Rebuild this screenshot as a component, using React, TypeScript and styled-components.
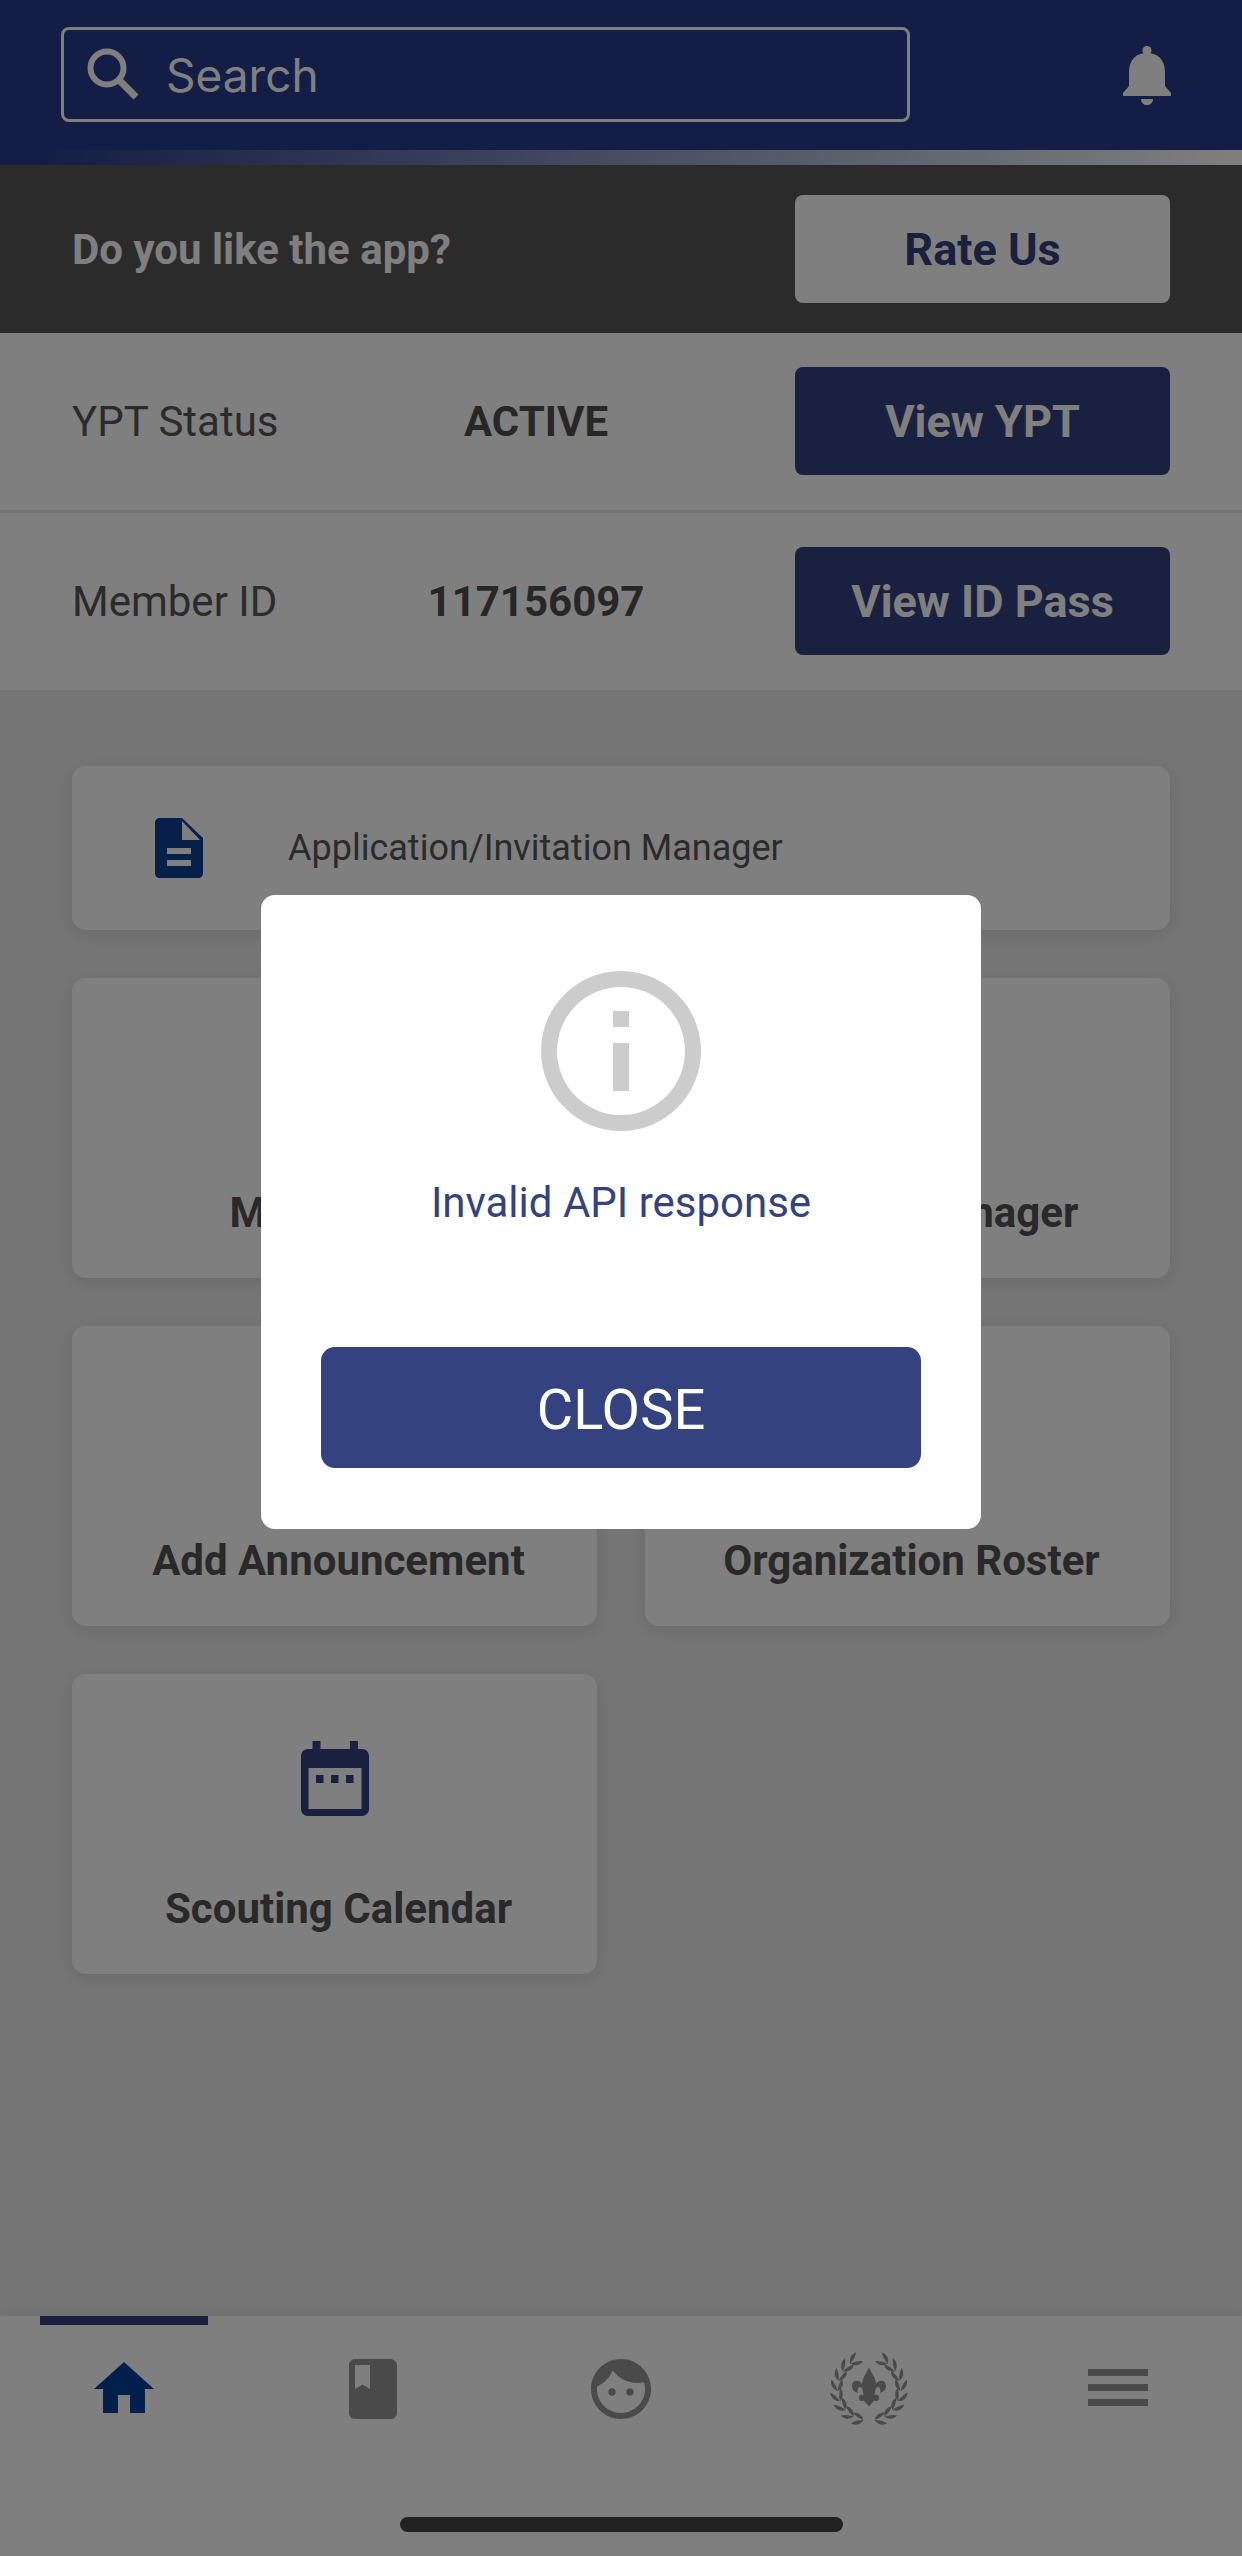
import React from 'react'
import styled, { createGlobalStyle } from 'styled-components'

const GlobalStyle = createGlobalStyle`
  html, body {
    margin: 0;
    padding: 0;
    background: #ebebeb;
    font-family: Roboto, "Liberation Sans", sans-serif;
  }
`
const Page = styled.div`
  width: 1242px;
  height: 2556px;
  position: relative;
  display: flex;
  flex-direction: column;
  overflow: hidden;
  background: #ebebeb;
`
const Header = styled.header`
  height: 150px;
  box-sizing: border-box;
  padding: 27px 71px 0 61px;
  display: flex;
  justify-content: space-between;
  align-items: flex-start;
  background: #283a8a;
`
const SearchBox = styled.div`
  width: 849px;
  height: 95px;
  box-sizing: border-box;
  border: 3px solid #fff;
  border-radius: 8px;
  padding-left: 23px;
  display: flex;
  align-items: center;
  gap: 25px;
`
const SearchText = styled.span`
  font-family: Inter, Roboto, sans-serif;
  font-size: 46px;
  color: #fff;
`
const BellButton = styled.div`
  display: flex;
  padding-top: 19px;
`
const HeaderStrip = styled.div`
  height: 15px;
  background: linear-gradient(90deg, #283a8a 3%, #ffffff 100%);
`
const RateBand = styled.section`
  height: 168px;
  box-sizing: border-box;
  padding: 0 72px;
  display: flex;
  justify-content: space-between;
  align-items: center;
  background: #565656;
`
const RateText = styled.span`
  font-size: 42px;
  font-weight: 700;
  color: #fff;
`
const ActionButton = styled.div<{ $light?: boolean }>`
  width: 375px;
  height: 108px;
  border-radius: 8px;
  display: flex;
  align-items: center;
  justify-content: center;
  font-size: 45px;
  font-weight: 700;
  background: ${p => (p.$light ? '#fff' : '#344280')};
  color: ${p => (p.$light ? '#344280' : '#fff')};
`
const InfoRow = styled.div`
  height: 177px;
  box-sizing: border-box;
  padding: 0 72px 1px;
  display: grid;
  grid-template-columns: 205px 1fr 375px;
  align-items: center;
  background: #fff;
  & + & {
    border-top: 3px solid #e6e6e6;
    height: 180px;
  }
`
const InfoLabel = styled.span`
  font-size: 42px;
  color: #565656;
  white-space: nowrap;
`
const InfoValue = styled.span`
  font-size: 42px;
  font-weight: 700;
  color: #4e4e4e;
  text-align: center;
`
const Main = styled.main`
  flex: 1;
  padding: 76px 72px 0;
  display: flex;
  flex-direction: column;
  gap: 48px;
`
const WideCard = styled.div`
  height: 164px;
  box-sizing: border-box;
  padding-left: 83px;
  border-radius: 14px;
  background: #fff;
  box-shadow: 0 4px 18px rgba(0, 0, 0, 0.1);
  display: flex;
  align-items: center;
  gap: 85px;
`
const WideLabel = styled.span`
  font-size: 36px;
  color: #565656;
`
const CardGrid = styled.div`
  display: grid;
  grid-template-columns: 525px 525px;
  gap: 48px;
`
const Tile = styled.div`
  height: 300px;
  box-sizing: border-box;
  padding-top: 67px;
  border-radius: 14px;
  background: #fff;
  box-shadow: 0 4px 18px rgba(0, 0, 0, 0.1);
  display: flex;
  flex-direction: column;
  align-items: center;
`
const TileIcon = styled.div`
  height: 75px;
  display: flex;
`
const TileLabel = styled.span`
  margin-top: 68px;
  padding-left: 8px;
  font-size: 42px;
  font-weight: 700;
  color: #525252;
`
const BottomNav = styled.nav`
  height: 240px;
  background: #fff;
  box-shadow: 0 -4px 14px rgba(0, 0, 0, 0.06);
`
const TabRow = styled.div`
  height: 146px;
  display: grid;
  grid-template-columns: repeat(5, 1fr);
`
const Tab = styled.div<{ $active?: boolean }>`
  position: relative;
  display: flex;
  align-items: center;
  justify-content: center;
  &::before {
    content: '';
    display: ${p => (p.$active ? 'block' : 'none')};
    position: absolute;
    top: 0;
    left: 40px;
    width: 168px;
    height: 9px;
    background: #344280;
  }
`
const HomeBar = styled.div`
  width: 443px;
  height: 15px;
  margin: 55px auto 0;
  border-radius: 8px;
  background: #444;
`
const Overlay = styled.div`
  position: absolute;
  inset: 0;
  background: rgba(0, 0, 0, 0.5);
  display: flex;
  justify-content: center;
  padding-top: 895px;
  box-sizing: border-box;
`
const Modal = styled.div`
  width: 720px;
  height: 634px;
  box-sizing: border-box;
  padding: 76px 60px 0;
  border-radius: 14px;
  background: #fff;
  display: flex;
  flex-direction: column;
  align-items: center;
`
const ModalMessage = styled.p`
  margin: 48px 0 0;
  font-size: 42px;
  line-height: 48px;
  color: #344280;
`
const CloseButton = styled.button`
  width: 600px;
  height: 121px;
  margin-top: 120px;
  padding: 4px 0 0;
  border: 0;
  border-radius: 14px;
  background: #344280;
  color: #fff;
  font-family: Roboto, sans-serif;
  font-size: 56px;
  font-weight: 400;
`

const SearchIcon = () => (
  <svg width="54" height="54" viewBox="0 0 54 54">
    <circle cx="20" cy="20" r="16.5" fill="none" stroke="#fff" strokeWidth="6" />
    <path d="M32 32L49 49" stroke="#fff" strokeWidth="7" />
  </svg>
)

const BellIcon = () => (
  <svg width="48" height="59" viewBox="0 0 48 59" fill="#fff">
    <circle cx="24" cy="4.5" r="4.5" />
    <path d="M24 7C13 7 6 14 6 26V40L0 47V50H48V47L42 40V26C42 14 35 7 24 7Z" />
    <path d="M18 53H30C30 57 27 59 24 59C21 59 18 57 18 53Z" />
  </svg>
)

const DocIcon = () => (
  <svg width="48" height="60" viewBox="0 0 48 60" fill="#0c4094">
    <path
      fillRule="evenodd"
      d="M5 0H27L48 20V55C48 58 46 60 43 60H5C2 60 0 58 0 55V5C0 2 2 0 5 0ZM27 3V22H45ZM12 30V36H36V30ZM12 42V48H36V42Z"
    />
  </svg>
)

const CalendarIcon = () => (
  <svg width="68" height="75" viewBox="0 0 68 75" fill="#344280">
    <path
      fillRule="evenodd"
      d="M11.5 0H19.5V8H49V0H57V8H61C65 8 68 11 68 15V68C68 72 65 75 61 75H7C3 75 0 72 0 68V15C0 11 3 8 7 8H11.5ZM7.5 27V68H60.5V27Z"
    />
    <path d="M15 34H22.5V42H15ZM30 34H37.5V42H30ZM45 34H52.5V42H45Z" />
  </svg>
)

const InfoIcon = () => (
  <svg width="160" height="160" viewBox="0 0 160 160" fill="#ccc">
    <path
      fillRule="evenodd"
      d="M80 0A80 80 0 1 0 80 160A80 80 0 1 0 80 0ZM80 16A64 64 0 1 1 80 144A64 64 0 1 1 80 16Z"
    />
    <path d="M72 40H88V56H72ZM72 72H88V120H72Z" />
  </svg>
)

const HomeIcon = () => (
  <svg width="60" height="54" viewBox="0 0 60 54" fill="#06409a">
    <path d="M30 0L60 27H51V51H36V33H24V51H9V27H0Z" />
  </svg>
)

const BookIcon = () => (
  <svg width="48" height="60" viewBox="0 0 48 60" fill="#949494">
    <path
      fillRule="evenodd"
      d="M6 0H42C45 0 48 3 48 6V54C48 57 45 60 42 60H6C3 60 0 57 0 54V6C0 3 3 0 6 0ZM6 6V30L13.5 25.5L21 30V6Z"
    />
  </svg>
)

const FaceIcon = () => (
  <svg width="60" height="60" viewBox="2 2 20 20" fill="#949494">
    <path d="M9 11.75c-.69 0-1.25.56-1.25 1.25s.56 1.25 1.25 1.25 1.25-.56 1.25-1.25-.56-1.25-1.25-1.25zm6 0c-.69 0-1.25.56-1.25 1.25s.56 1.25 1.25 1.25 1.25-.56 1.25-1.25-.56-1.25-1.25-1.25zM12 2C6.48 2 2 6.48 2 12s4.48 10 10 10 10-4.48 10-10S17.52 2 12 2zm0 18c-4.41 0-8-3.59-8-8 0-.29.02-.58.05-.86 2.36-1.05 4.23-2.98 5.21-5.37C11.07 8.33 14.05 10 17.42 10c.78 0 1.53-.09 2.25-.26.21.71.33 1.47.33 2.26 0 4.41-3.59 8-8 8z" />
  </svg>
)

// wreath leaf pairs, degrees clockwise from the bottom of the circle
const leafAngles = [10, 29, 48, 67, 86, 105, 124, 143]

const EmblemIcon = () => (
  <svg width="80" height="80" viewBox="0 0 80 80" fill="#949494">
    {[1, -1].map(side => (
      <g key={side} transform={`translate(40 40) scale(${side} 1)`}>
        {leafAngles.map(a => (
          <g key={a} transform={`rotate(${a})`}>
            <path d="M0 31.500Q-4 39.500 -12 37Q-7 32.500 0 31.500Z" />
            <path d="M0 31.500Q-4 23.500 -12 26Q-7 30.500 0 31.500Z" />
          </g>
        ))}
      </g>
    ))}
    <path d="M40 18C42 24 47 29 47 35C50 30 57 31 57 37C57 41 54 43 51 44C52 41 51 38 49 38C47 38 46 41 46 44L45 46C49 45 51 47 50 50C49 52.500 47 52.500 45.500 51.500C44 53 42 55 40 57.500C38 55 36 53 34.500 51.500C33 52.500 31 52.500 30 50C29 47 31 45 35 46L34 44C34 41 33 38 31 38C29 38 28 41 29 44C26 43 23 41 23 37C23 31 30 30 33 35C33 29 38 24 40 18Z" />
  </svg>
)

const MenuIcon = () => (
  <svg width="60" height="40" viewBox="0 0 60 40" fill="#949494">
    <path d="M0 0H60V7H0ZM0 15H60V22H0ZM0 30H60V37H0Z" />
  </svg>
)

const tiles = [
  { label: 'Mail Center' },
  { label: 'Position Manager' },
  { label: 'Add Announcement' },
  { label: 'Organization Roster' },
  { label: 'Scouting Calendar', icon: <CalendarIcon /> },
]

const App: React.FC = () => {
  return (
    <Page>
      <GlobalStyle />
      <Header>
        <SearchBox>
          <SearchIcon />
          <SearchText>Search</SearchText>
        </SearchBox>
        <BellButton>
          <BellIcon />
        </BellButton>
      </Header>
      <HeaderStrip />
      <RateBand>
        <RateText>Do you like the app?</RateText>
        <ActionButton $light>Rate Us</ActionButton>
      </RateBand>
      <div>
        <InfoRow>
          <InfoLabel>YPT Status</InfoLabel>
          <InfoValue>ACTIVE</InfoValue>
          <ActionButton>View YPT</ActionButton>
        </InfoRow>
        <InfoRow>
          <InfoLabel>Member ID</InfoLabel>
          <InfoValue>117156097</InfoValue>
          <ActionButton>View ID Pass</ActionButton>
        </InfoRow>
      </div>
      <Main>
        <WideCard>
          <DocIcon />
          <WideLabel>Application/Invitation Manager</WideLabel>
        </WideCard>
        <CardGrid>
          {tiles.map(tile => (
            <Tile key={tile.label}>
              <TileIcon>{tile.icon}</TileIcon>
              <TileLabel>{tile.label}</TileLabel>
            </Tile>
          ))}
        </CardGrid>
      </Main>
      <BottomNav>
        <TabRow>
          <Tab $active>
            <HomeIcon />
          </Tab>
          <Tab>
            <BookIcon />
          </Tab>
          <Tab>
            <FaceIcon />
          </Tab>
          <Tab>
            <EmblemIcon />
          </Tab>
          <Tab>
            <MenuIcon />
          </Tab>
        </TabRow>
        <HomeBar />
      </BottomNav>
      <Overlay>
        <Modal>
          <InfoIcon />
          <ModalMessage>Invalid API response</ModalMessage>
          <CloseButton>CLOSE</CloseButton>
        </Modal>
      </Overlay>
    </Page>
  )
}

export default App
